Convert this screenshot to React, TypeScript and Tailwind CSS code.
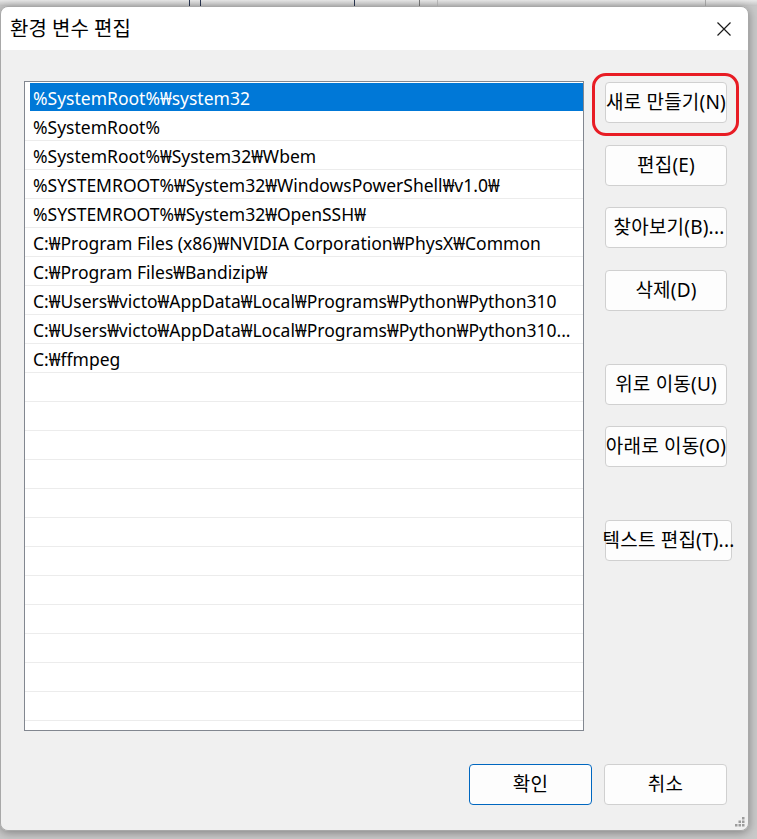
const paths = [
  '%SystemRoot%₩system32',
  '%SystemRoot%',
  '%SystemRoot%₩System32₩Wbem',
  '%SYSTEMROOT%₩System32₩WindowsPowerShell₩v1.0₩',
  '%SYSTEMROOT%₩System32₩OpenSSH₩',
  'C:₩Program Files (x86)₩NVIDIA Corporation₩PhysX₩Common',
  'C:₩Program Files₩Bandizip₩',
  'C:₩Users₩victo₩AppData₩Local₩Programs₩Python₩Python310',
  'C:₩Users₩victo₩AppData₩Local₩Programs₩Python₩Python310...',
  'C:₩ffmpeg',
];

const ROWS = 23;

interface ButtonProps {
  label: string;
  className?: string;
  primary?: boolean;
}

const DialogButton = ({ label, className = '', primary }: ButtonProps) => (
  <button
    className={`flex h-[41px] items-center justify-center whitespace-nowrap rounded-[4px] border bg-[#fdfdfd] text-[19px] leading-none tracking-[0.2px] text-black ${
      primary ? 'border-[#0067c0]' : 'border-[#d0d0d0]'
    } ${className}`}
  >
    {label}
  </button>
);

const ResizeGrip = () => (
  <svg width="10" height="10" viewBox="0 0 10 10" className="absolute bottom-[3px] right-[3px]">
    <g fill="#9c9c9c">
      <rect x="7" y="0" width="2.5" height="2.5" />
      <rect x="3.5" y="3.5" width="2.5" height="2.5" />
      <rect x="7" y="3.5" width="2.5" height="2.5" />
      <rect x="0" y="7" width="2.5" height="2.5" />
      <rect x="3.5" y="7" width="2.5" height="2.5" />
      <rect x="7" y="7" width="2.5" height="2.5" />
    </g>
  </svg>
);

export default function App() {
  return (
    <div className="flex h-[839px] w-[757px] flex-col overflow-hidden bg-[#c9c9c9] font-['Noto_Sans','Noto_Sans_CJK_KR',sans-serif]">
      {/* window behind the dialog */}
      <div className="flex h-[6px] shrink-0 bg-linear-to-b from-[#e8e8e8] to-[#c4c4c4]">
        <div className="ml-[189px] w-px bg-[#2a3550]" />
        <div className="ml-[10px] w-px bg-[#2a3550]" />
        <div className="ml-[153px] w-px bg-[#2a3550]" />
        <div className="ml-[64px] w-px bg-[#777]" />
        <div className="ml-[17px] w-px bg-[#bbb]" />
        <div className="ml-[267px] w-px bg-[#aaa]" />
      </div>

      <div className="relative flex h-[825px] w-[749px] shrink-0 flex-col overflow-hidden rounded-[8px] border border-[#a8a8a8] shadow-[0_2px_10px_rgba(0,0,0,0.35)]">
        <div className="flex h-[43px] shrink-0 items-center justify-between bg-white pl-[9px] pr-[16px]">
          <span className="text-[20px] text-black">환경 변수 편집</span>
          <svg width="16" height="16" viewBox="0 0 16 16" className="mt-px">
            <path d="M1.5 1.5 L14.5 14.5 M14.5 1.5 L1.5 14.5" stroke="#1a1a1a" strokeWidth="1.2" />
          </svg>
        </div>

        <div className="flex flex-1 flex-col bg-[#f0f0f0]">
          <div className="flex pl-[23px] pt-[31px]">
            <div className="h-[650px] w-[560px] overflow-hidden border border-[#828790] bg-white pt-px">
              {Array.from({ length: ROWS }).map((_, i) => {
                const text = paths[i];
                const selected = i === 0;
                return (
                  <div
                    key={i}
                    className={`h-[29px] border-b ${selected ? 'border-white' : 'border-[#ececec]'}`}
                  >
                    <div
                      className={`ml-[5px] flex h-full items-center whitespace-nowrap pl-[3px] pt-[3px] text-[17.5px] ${
                        selected ? 'bg-[#0078d7] text-white' : 'text-black'
                      }`}
                    >
                      {text}
                    </div>
                  </div>
                );
              })}
            </div>

            <div className="relative ml-[21px] mt-px flex flex-col items-start">
              <div className="absolute left-[-13px] top-[-9px] h-[63px] w-[147px] rounded-[14px] border-[3px] border-[#e81c24]" />
              <DialogButton label="새로 만들기(N)" className="w-[122px]" />
              <DialogButton label="편집(E)" className="mt-[22px] w-[122px]" />
              <DialogButton label="찾아보기(B)..." className="mt-[21px] w-[122px] pl-[6px]" />
              <DialogButton label="삭제(D)" className="mt-[22px] w-[122px]" />
              <DialogButton label="위로 이동(U)" className="mt-[53px] w-[122px]" />
              <DialogButton label="아래로 이동(O)" className="mt-[21px] w-[122px]" />
              <DialogButton label="텍스트 편집(T)..." className="mt-[53px] w-[127px]" />
            </div>
          </div>

          <div className="mt-[33px] flex justify-end gap-[12px] pr-[21px]">
            <DialogButton label="확인" primary className="w-[123px]" />
            <DialogButton label="취소" className="w-[123px]" />
          </div>
        </div>

        <ResizeGrip />
      </div>
    </div>
  );
}
